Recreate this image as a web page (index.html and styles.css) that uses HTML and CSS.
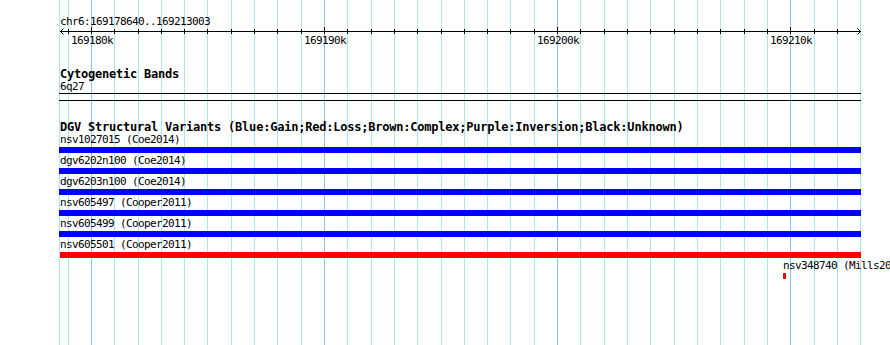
FILE: index.html
```html
<!DOCTYPE html>
<html lang="en">
  <head>
    <meta charset="UTF-8" />
    <meta name="viewport" content="width=device-width, initial-scale=1.0" />
    <title>chr6:169178640..169213003</title>
    <link rel="stylesheet" href="styles.css">
  </head>
  <body>
    <div class="panel">
      <!-- grid: one line per kb, darker every 10 kb -->
      <svg class="grid" width="890" height="345" shape-rendering="crispEdges">
        <g class="minor">
          <line x1="59.5" y1="0" x2="59.5" y2="345" />
          <line x1="68.5" y1="0" x2="68.5" y2="345" />
          <line x1="114.5" y1="0" x2="114.5" y2="345" />
          <line x1="138.5" y1="0" x2="138.5" y2="345" />
          <line x1="161.5" y1="0" x2="161.5" y2="345" />
          <line x1="184.5" y1="0" x2="184.5" y2="345" />
          <line x1="207.5" y1="0" x2="207.5" y2="345" />
          <line x1="231.5" y1="0" x2="231.5" y2="345" />
          <line x1="254.5" y1="0" x2="254.5" y2="345" />
          <line x1="277.5" y1="0" x2="277.5" y2="345" />
          <line x1="301.5" y1="0" x2="301.5" y2="345" />
          <line x1="347.5" y1="0" x2="347.5" y2="345" />
          <line x1="371.5" y1="0" x2="371.5" y2="345" />
          <line x1="394.5" y1="0" x2="394.5" y2="345" />
          <line x1="417.5" y1="0" x2="417.5" y2="345" />
          <line x1="441.5" y1="0" x2="441.5" y2="345" />
          <line x1="464.5" y1="0" x2="464.5" y2="345" />
          <line x1="487.5" y1="0" x2="487.5" y2="345" />
          <line x1="510.5" y1="0" x2="510.5" y2="345" />
          <line x1="534.5" y1="0" x2="534.5" y2="345" />
          <line x1="580.5" y1="0" x2="580.5" y2="345" />
          <line x1="604.5" y1="0" x2="604.5" y2="345" />
          <line x1="627.5" y1="0" x2="627.5" y2="345" />
          <line x1="650.5" y1="0" x2="650.5" y2="345" />
          <line x1="674.5" y1="0" x2="674.5" y2="345" />
          <line x1="697.5" y1="0" x2="697.5" y2="345" />
          <line x1="720.5" y1="0" x2="720.5" y2="345" />
          <line x1="744.5" y1="0" x2="744.5" y2="345" />
          <line x1="767.5" y1="0" x2="767.5" y2="345" />
          <line x1="814.5" y1="0" x2="814.5" y2="345" />
          <line x1="837.5" y1="0" x2="837.5" y2="345" />
          <line x1="860.5" y1="0" x2="860.5" y2="345" />
        </g>
        <g class="major">
          <line x1="91.5" y1="0" x2="91.5" y2="345" />
          <line x1="324.5" y1="0" x2="324.5" y2="345" />
          <line x1="557.5" y1="0" x2="557.5" y2="345" />
          <line x1="790.5" y1="0" x2="790.5" y2="345" />
        </g>
      </svg>

      <div class="tracks">
        <div class="ruler">
          <div class="label ruler-title">chr6:169178640..169213003</div>
          <svg class="scale" width="890" height="20" shape-rendering="crispEdges">
            <line class="axis" x1="60" y1="4.5" x2="861" y2="4.5" />
            <path class="arrow" d="M63.5 1.5 L60.5 4.5 L63.5 7.5" shape-rendering="auto" />
            <path class="arrow" d="M857.5 1.5 L860.5 4.5 L857.5 7.5" shape-rendering="auto" />
            <g class="ticks">
              <line x1="68.5" y1="2" x2="68.5" y2="7" />
              <line x1="91.5" y1="0" x2="91.5" y2="7" />
              <line x1="114.5" y1="2" x2="114.5" y2="7" />
              <line x1="138.5" y1="2" x2="138.5" y2="7" />
              <line x1="161.5" y1="2" x2="161.5" y2="7" />
              <line x1="184.5" y1="2" x2="184.5" y2="7" />
              <line x1="207.5" y1="2" x2="207.5" y2="7" />
              <line x1="231.5" y1="2" x2="231.5" y2="7" />
              <line x1="254.5" y1="2" x2="254.5" y2="7" />
              <line x1="277.5" y1="2" x2="277.5" y2="7" />
              <line x1="301.5" y1="2" x2="301.5" y2="7" />
              <line x1="324.5" y1="0" x2="324.5" y2="7" />
              <line x1="347.5" y1="2" x2="347.5" y2="7" />
              <line x1="371.5" y1="2" x2="371.5" y2="7" />
              <line x1="394.5" y1="2" x2="394.5" y2="7" />
              <line x1="417.5" y1="2" x2="417.5" y2="7" />
              <line x1="441.5" y1="2" x2="441.5" y2="7" />
              <line x1="464.5" y1="2" x2="464.5" y2="7" />
              <line x1="487.5" y1="2" x2="487.5" y2="7" />
              <line x1="510.5" y1="2" x2="510.5" y2="7" />
              <line x1="534.5" y1="2" x2="534.5" y2="7" />
              <line x1="557.5" y1="0" x2="557.5" y2="7" />
              <line x1="580.5" y1="2" x2="580.5" y2="7" />
              <line x1="604.5" y1="2" x2="604.5" y2="7" />
              <line x1="627.5" y1="2" x2="627.5" y2="7" />
              <line x1="650.5" y1="2" x2="650.5" y2="7" />
              <line x1="674.5" y1="2" x2="674.5" y2="7" />
              <line x1="697.5" y1="2" x2="697.5" y2="7" />
              <line x1="720.5" y1="2" x2="720.5" y2="7" />
              <line x1="744.5" y1="2" x2="744.5" y2="7" />
              <line x1="767.5" y1="2" x2="767.5" y2="7" />
              <line x1="790.5" y1="0" x2="790.5" y2="7" />
              <line x1="814.5" y1="2" x2="814.5" y2="7" />
              <line x1="837.5" y1="2" x2="837.5" y2="7" />
            </g>
            <g class="tick-labels">
              <text x="92" y="17">169180k</text>
              <text x="325" y="17">169190k</text>
              <text x="558" y="17">169200k</text>
              <text x="791" y="17">169210k</text>
            </g>
          </svg>
        </div>

        <div class="track cyto">
          <div class="track-title">Cytogenetic Bands</div>
          <div class="label">6q27</div>
          <div class="band"></div>
        </div>

        <div class="track dgv">
          <div class="track-title">DGV Structural Variants (Blue:Gain;Red:Loss;Brown:Complex;Purple:Inversion;Black:Unknown)</div>

          <div class="feature">
            <div class="label">nsv1027015 (Coe2014)</div>
            <div class="bar gain" style="margin-left: 59px; width: 802px"></div>
          </div>
          <div class="feature">
            <div class="label">dgv6202n100 (Coe2014)</div>
            <div class="bar gain" style="margin-left: 59px; width: 802px"></div>
          </div>
          <div class="feature">
            <div class="label">dgv6203n100 (Coe2014)</div>
            <div class="bar gain" style="margin-left: 59px; width: 802px"></div>
          </div>
          <div class="feature">
            <div class="label">nsv605497 (Cooper2011)</div>
            <div class="bar gain" style="margin-left: 59px; width: 802px"></div>
          </div>
          <div class="feature">
            <div class="label">nsv605499 (Cooper2011)</div>
            <div class="bar gain" style="margin-left: 59px; width: 802px"></div>
          </div>
          <div class="feature">
            <div class="label">nsv605501 (Cooper2011)</div>
            <div class="bar loss" style="margin-left: 60px; width: 801px"></div>
          </div>
          <div class="feature">
            <div class="label" style="padding-left: 783px">nsv348740 (Mills2011)</div>
            <div class="bar loss" style="margin-left: 783px; width: 3px"></div>
          </div>
        </div>
      </div>
    </div>
  </body>
</html>
```

FILE: styles.css
```css
* {
  margin: 0;
  box-sizing: border-box;
}

body {
  background: #fff;
  color: #000;
  font-family: "DejaVu Sans Mono", "Liberation Mono", monospace;
}

.panel {
  position: relative;
  width: 890px;
  height: 345px;
  overflow: hidden;
  background: #fff;
}

.grid {
  position: absolute;
  top: 0;
  left: 0;
}

.grid .minor line {
  stroke: #a9e6f0;
  stroke-width: 1;
}

.grid .major line {
  stroke: #88c2ee;
  stroke-width: 1;
}

.tracks {
  position: relative;
}

.label {
  font-size: 11px;
  line-height: 11px;
  letter-spacing: -0.62px;
  white-space: nowrap;
  padding-left: 60px;
}

.ruler {
  padding-top: 16px;
}

.scale {
  display: block;
}

.scale .axis,
.scale .ticks line {
  stroke: #000;
  stroke-width: 1;
}

.scale .arrow {
  fill: none;
  stroke: #000;
  stroke-width: 1;
}

.tick-labels text {
  font-family: "DejaVu Sans Mono", "Liberation Mono", monospace;
  font-size: 11px;
  letter-spacing: -0.62px;
  text-anchor: middle;
  fill: #000;
}

.track-title {
  font-size: 12px;
  line-height: 13px;
  font-weight: bold;
  letter-spacing: -0.22px;
  white-space: nowrap;
  padding-left: 60px;
}

.cyto {
  margin-top: 21px;
}

.band {
  margin-top: 1px;
  margin-left: 59px;
  width: 802px;
  height: 8px;
  border-top: 1px solid #000;
  border-bottom: 1px solid #000;
}

.dgv {
  margin-top: 20px;
}

.feature {
  padding-bottom: 2px;
}

.bar {
  margin-top: 2px;
  height: 6px;
}

.bar.gain {
  background: #0000ff;
}

.bar.loss {
  background: #ff0000;
}
```
